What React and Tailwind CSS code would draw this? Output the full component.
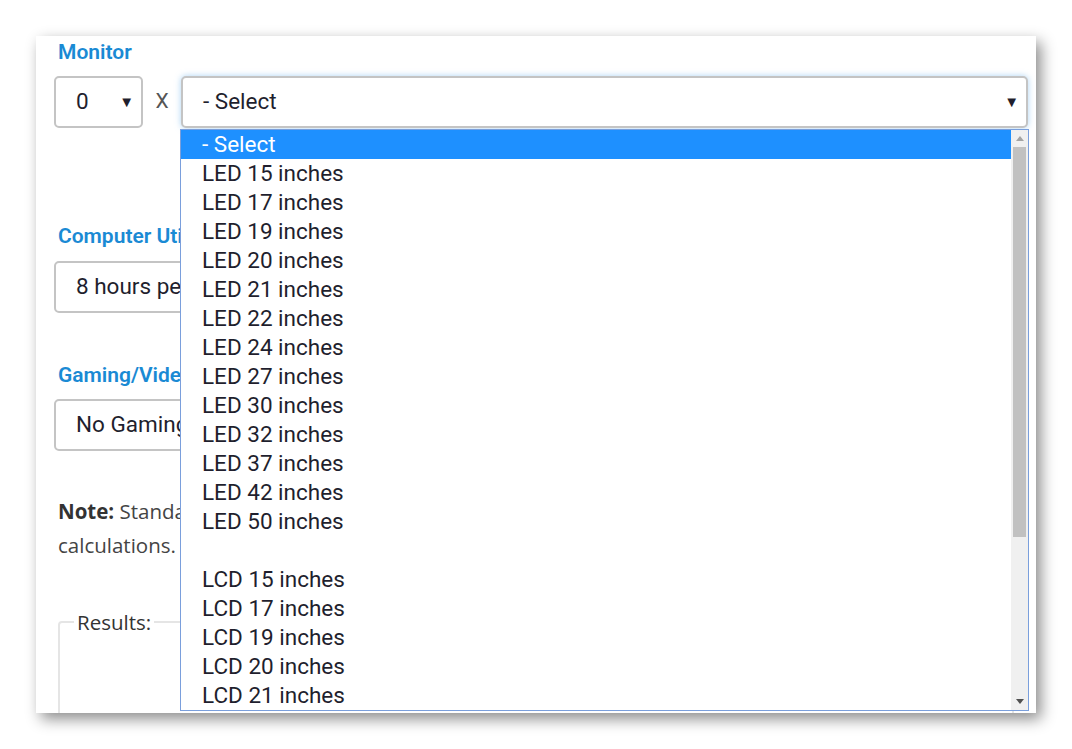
const options = [
  '- Select',
  'LED 15 inches',
  'LED 17 inches',
  'LED 19 inches',
  'LED 20 inches',
  'LED 21 inches',
  'LED 22 inches',
  'LED 24 inches',
  'LED 27 inches',
  'LED 30 inches',
  'LED 32 inches',
  'LED 37 inches',
  'LED 42 inches',
  'LED 50 inches',
  '',
  'LCD 15 inches',
  'LCD 17 inches',
  'LCD 19 inches',
  'LCD 20 inches',
  'LCD 21 inches',
];

const Label = ({ children }) => (
  <div className="text-[21px] font-semibold text-[#1a8ad4] leading-[24px] whitespace-nowrap">{children}</div>
);

const FakeSelect = ({ children, className = '' }) => (
  <div
    className={`h-[52px] flex items-center pl-[20px] pr-[7px] border-2 border-[#c4c4c4] rounded-[5px] bg-white text-[22.5px] text-[#1f1f2e] ${className}`}
  >
    <span className="flex-1 whitespace-nowrap">{children}</span>
    <span className="text-[15px] text-[#1f1f2e]">▼</span>
  </div>
);

const Dropdown = () => (
  <div className="absolute left-[144px] top-[93px] w-[849px] h-[582px] border border-[#7a9fdc] bg-white flex overflow-hidden">
    <div className="flex-1 flex flex-col">
      {options.map((o, i) => (
        <div
          key={i}
          className={`h-[29px] shrink-0 flex items-center pl-[21px] text-[22.5px] ${
            i === 0 ? 'bg-[#1e90ff] text-white' : 'text-[#1f1f2e]'
          }`}
        >
          {o}
        </div>
      ))}
    </div>
    <div className="w-[17px] bg-[#f0f0f0] flex flex-col items-center">
      <div className="h-[17px] flex items-center justify-center">
        <svg width="8" height="5" viewBox="0 0 8 5"><path d="M4 0 L8 5 L0 5 Z" fill="#a3a3a3" /></svg>
      </div>
      <div className="w-[13px] h-[390px] bg-[#c1c1c1]" />
      <div className="flex-1" />
      <div className="h-[17px] flex items-center justify-center">
        <svg width="8" height="5" viewBox="0 0 8 5"><path d="M0 0 L8 0 L4 5 Z" fill="#505050" /></svg>
      </div>
    </div>
  </div>
);

export default function App() {
  return (
    <div className="w-[1072px] h-[749px] bg-white pt-[36px] pl-[36px]" style={{ fontFamily: 'Roboto, sans-serif' }}>
      <div className="relative w-[1000px] h-[677px] bg-white overflow-hidden shadow-[5px_6px_14px_rgba(0,0,0,0.45)]">
        <div className="pl-[18px] pr-[8px] pt-[4px]">
          <div className="pl-[4px]">
            <Label>Monitor</Label>
          </div>
          <div className="flex items-center mt-[12px]">
            <FakeSelect className="w-[89px]">0</FakeSelect>
            <span className="w-[38px] text-center text-[21px] text-[#555]">X</span>
            <FakeSelect className="flex-1 border-[#bcbcbc] shadow-[0_0_6px_rgba(102,175,233,0.55)]">- Select</FakeSelect>
          </div>

          <div className="pl-[4px] mt-[96px]">
            <Label>Computer Utilization</Label>
          </div>
          <FakeSelect className="mt-[13px]">8 hours per day</FakeSelect>

          <div className="pl-[4px] mt-[50px]">
            <Label>Gaming/Video Usage</Label>
          </div>
          <FakeSelect className="mt-[12px]">No Gaming</FakeSelect>

          <p
            className="pl-[4px] mt-[43px] text-[20.5px] leading-[34px] text-[#444] whitespace-nowrap"
            style={{ fontFamily: '"Open Sans", sans-serif' }}
          >
            <b className="text-[#333]">Note:</b> Standard power ratings are used for the
            <br />
            calculations.
          </p>

          <fieldset
            className="ml-[4px] mr-[14px] mt-[46px] h-[120px] border-2 border-[#e5e5e5] rounded-[4px] px-[14px]"
            style={{ fontFamily: '"Open Sans", sans-serif' }}
          >
            <legend className="px-[3px] text-[20.5px] leading-[28px] text-[#333]">Results:</legend>
          </fieldset>
        </div>

        <Dropdown />
      </div>
    </div>
  );
}
